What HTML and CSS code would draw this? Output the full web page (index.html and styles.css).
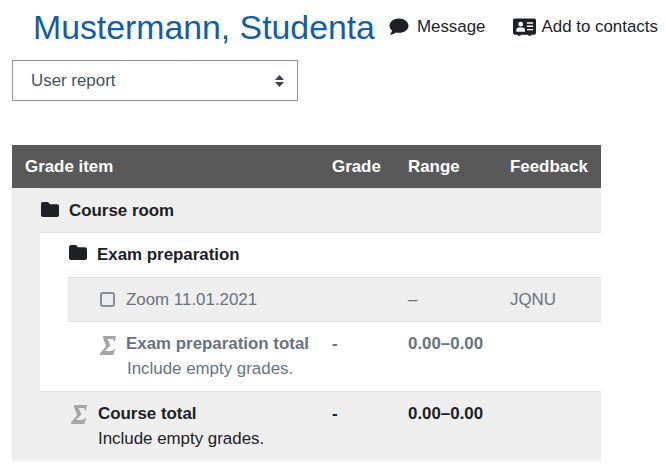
FILE: index.html
```html
<!DOCTYPE html>
<html lang="en">
  <head>
    <meta charset="UTF-8" />
    <meta name="viewport" content="width=device-width, initial-scale=1.0" />
    <title>User report</title>
    <link rel="stylesheet" href="styles.css">
  </head>
  <body>
    <header class="page-head">
      <h1>Mustermann, Studenta</h1>
      <a class="head-link link-message">
        <svg class="icon-message" viewBox="0 0 20 18"><path d="M10 .5C4.700 .5 .5 3.700 .5 7.700c0 1.900 1 3.600 2.500 4.900-.3 1.600-1.200 3-2.200 4.200 2.300-.1 4.500-1 6-2.300.9.2 2 .3 3.200.3 5.300 0 9.500-3.200 9.500-7.100S15.300 .5 10 .5z"/></svg>
        Message
      </a>
      <a class="head-link link-contacts">
        <svg class="icon-card" viewBox="0 0 24 18"><path fill-rule="evenodd" d="M2 0h20a2 2 0 0 1 2 2v13a2 2 0 0 1-2 2h-3v1h-3v-1H8v1H5v-1H2a2 2 0 0 1-2-2V2a2 2 0 0 1 2-2zM8 3.500a2.500 2.500 0 1 0 0 5 2.500 2.500 0 0 0 0-5zM3.500 14h9v-1.800c0-1.500-1.100-2.700-2.500-2.700H6c-1.400 0-2.500 1.200-2.500 2.700zM14.500 4v1.500h6.500V4zM14.500 7.500V9h6.500V7.500zM14.500 11v1.500h6.500V11z"/></svg>
        Add to contacts
      </a>
    </header>

    <div class="report-select">
      <span>User report</span>
      <svg class="select-arrows" viewBox="0 0 9 12"><path d="M4.500 0 9 5H0zM4.500 12 0 7h9z"/></svg>
    </div>

    <table class="grades">
      <colgroup>
        <col class="col-level" />
        <col class="col-level" />
        <col class="col-item" />
        <col class="col-grade" />
        <col class="col-range" />
        <col class="col-feedback" />
      </colgroup>
      <thead>
        <tr>
          <th colspan="3">Grade item</th>
          <th>Grade</th>
          <th>Range</th>
          <th>Feedback</th>
        </tr>
      </thead>
      <tbody>
        <tr>
          <td rowspan="5" class="spacer shade"></td>
          <td colspan="5" class="shade cell-course">
            <span class="item-name strong">
              <svg class="icon-folder" viewBox="0 0 18 15"><path d="M2 0h4.200c.8 0 1.400.4 1.800 1l.9 1.300H16a2 2 0 0 1 2 2V13a2 2 0 0 1-2 2H2a2 2 0 0 1-2-2V2a2 2 0 0 1 2-2z"/></svg>
              Course room
            </span>
          </td>
        </tr>
        <tr>
          <td rowspan="3" class="indent"></td>
          <td colspan="4" class="cell-category">
            <span class="item-name strong">
              <svg class="icon-folder" viewBox="0 0 18 15"><path d="M2 0h4.200c.8 0 1.400.4 1.800 1l.9 1.300H16a2 2 0 0 1 2 2V13a2 2 0 0 1-2 2H2a2 2 0 0 1-2-2V2a2 2 0 0 1 2-2z"/></svg>
              Exam preparation
            </span>
          </td>
        </tr>
        <tr class="muted shade">
          <td class="cell-item">
            <span class="item-name">
              <span class="icon-box"></span>
              Zoom 11.01.2021
            </span>
          </td>
          <td></td>
          <td>&ndash;</td>
          <td>JQNU</td>
        </tr>
        <tr class="muted">
          <td class="cell-item">
            <span class="item-name strong">
              <svg class="icon-sum" viewBox="0 0 16 19"><path d="M3 0H16l-1 5.500h-1C14 3.600 13 3 11 3H7.500l3 6.200L5 15h5c2 0 3.500-.5 4-2.200h1L13.500 19H0v-1.600L6 10.300 3 1.800z"/></svg>
              Exam preparation total
            </span>
            <div class="note">Include empty grades.</div>
          </td>
          <td class="strong">-</td>
          <td class="strong">0.00&ndash;0.00</td>
          <td></td>
        </tr>
        <tr class="shade">
          <td colspan="2" class="cell-total">
            <span class="item-name strong">
              <svg class="icon-sum" viewBox="0 0 16 19"><path d="M3 0H16l-1 5.500h-1C14 3.600 13 3 11 3H7.500l3 6.200L5 15h5c2 0 3.500-.5 4-2.200h1L13.500 19H0v-1.600L6 10.300 3 1.800z"/></svg>
              Course total
            </span>
            <div class="note">Include empty grades.</div>
          </td>
          <td class="strong">-</td>
          <td class="strong">0.00&ndash;0.00</td>
          <td></td>
        </tr>
      </tbody>
    </table>
  </body>
</html>
```

FILE: styles.css
```css
body {
  font-family: "Liberation Sans", Arial, sans-serif;
  font-size: 16.9px;
  line-height: 1.5;
  color: #1d2125;
  margin: 0;
  padding: 0 0 0 12px;
}

.page-head {
  display: flex;
  align-items: center;
  height: 54px;
  padding-left: 21px;
}

h1 {
  margin: 0 14px 0 0;
  font-size: 33.8px;
  font-weight: 400;
  color: #0f5ea8;
}

.head-link {
  display: flex;
  align-items: center;
  gap: 8px;
  white-space: nowrap;
}

.link-message {
  margin-right: 28px;
}

.link-contacts {
  gap: 5px;
}

.icon-message {
  width: 20px;
  height: 18px;
  fill: #1d2125;
}

.icon-card {
  width: 23px;
  height: 18px;
  fill: #1d2125;
}

.report-select {
  display: flex;
  justify-content: space-between;
  align-items: center;
  box-sizing: border-box;
  width: 286px;
  height: 41px;
  margin-top: 6px;
  padding: 0 13px 0 18px;
  border: 1px solid #8f959e;
  color: #495057;
}

.select-arrows {
  width: 9px;
  height: 12px;
  fill: #3d444b;
}

.grades {
  table-layout: fixed;
  border-collapse: separate;
  border-spacing: 0;
  width: 589px;
  margin-top: 44px;
}

.col-level {
  width: 28px;
}

.col-grade {
  width: 76px;
}

.col-range {
  width: 102px;
}

.col-feedback {
  width: 104px;
}

th {
  padding: 9px 0 9px 13px;
  background-color: #595959;
  color: white;
  font-weight: 700;
  text-align: left;
}

td {
  padding: 9px 0 9px 13px;
  border-top: 1px solid #dee2e6;
  vertical-align: top;
}

.shade {
  background-color: #eeeeee;
}

.spacer {
  padding: 0;
  border-top: none;
}

.indent {
  padding: 0;
}

.strong {
  font-weight: 700;
}

.cell-course {
  padding: 9px 0 8px 1px;
}

.cell-category {
  padding: 9px 0 10px 1px;
}

.cell-item {
  padding-left: 32px;
}

.cell-total {
  padding-left: 31px;
}

.item-name {
  display: flex;
  align-items: center;
  gap: 9px;
}

.icon-folder {
  width: 18px;
  height: 15px;
  margin: 0 1px 3px 0;
  fill: #1d2125;
}

.icon-box {
  box-sizing: border-box;
  width: 15px;
  height: 15px;
  margin-right: 2px;
  border: 2px solid #868e96;
  border-radius: 3px;
}

.icon-sum {
  width: 16px;
  height: 19px;
  margin: 2px 1px 0 0;
  fill: #a6a6a6;
}

.cell-total .icon-sum {
  margin-right: 2px;
}

.muted {
  color: #6a737b;
}

.note {
  margin: -1px 0 1px 27px;
  font-weight: 400;
}
```
